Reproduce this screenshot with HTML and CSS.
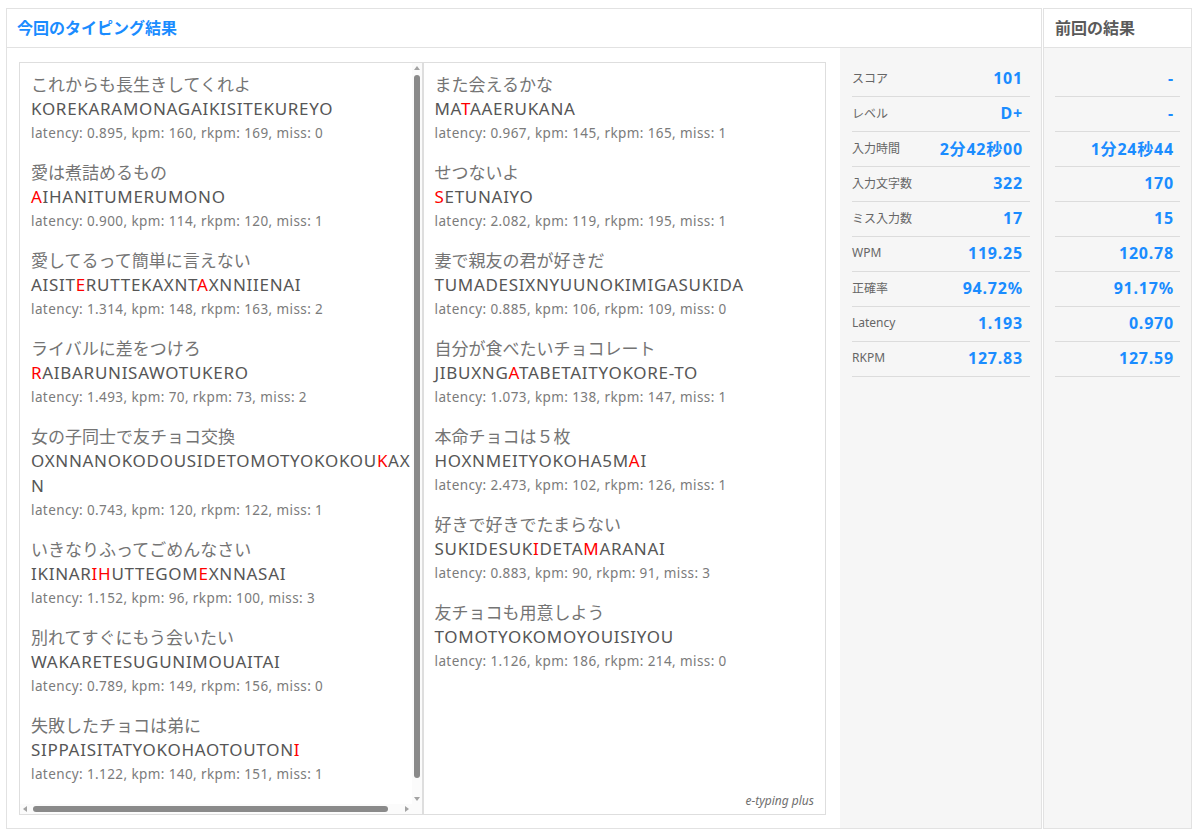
FILE: index.html
```html
<!DOCTYPE html>
<html lang="ja">
<head>
<meta charset="utf-8">
<title>今回のタイピング結果</title>
<link rel="stylesheet" href="styles.css">
</head>
<body>
<div class="page">
  <section class="panel current">
    <header class="panel-head"><h2 class="title-current">今回のタイピング結果</h2></header>
    <div class="panel-body">
      <div class="lists">
        <div class="box box-scroll">
          <div class="box-content">
            <div class="entry"><div class="jp">これからも長生きしてくれよ</div><div class="ro">KOREKARAMONAGAIKISITEKUREYO</div><div class="meta">latency: 0.895, kpm: 160, rkpm: 169, miss: 0</div></div>
            <div class="entry"><div class="jp">愛は煮詰めるもの</div><div class="ro"><span class="miss">A</span>IHANITUMERUMONO</div><div class="meta">latency: 0.900, kpm: 114, rkpm: 120, miss: 1</div></div>
            <div class="entry"><div class="jp">愛してるって簡単に言えない</div><div class="ro">AISIT<span class="miss">E</span>RUTTEKAXNT<span class="miss">A</span>XNNIIENAI</div><div class="meta">latency: 1.314, kpm: 148, rkpm: 163, miss: 2</div></div>
            <div class="entry"><div class="jp">ライバルに差をつけろ</div><div class="ro"><span class="miss">R</span>AIBARUNISAWOTUKERO</div><div class="meta">latency: 1.493, kpm: 70, rkpm: 73, miss: 2</div></div>
            <div class="entry"><div class="jp">女の子同士で友チョコ交換</div><div class="ro">OXNNANOKODOUSIDETOMOTYOKOKOU<span class="miss">K</span>AX<wbr>N</div><div class="meta">latency: 0.743, kpm: 120, rkpm: 122, miss: 1</div></div>
            <div class="entry"><div class="jp">いきなりふってごめんなさい</div><div class="ro">IKINAR<span class="miss">IH</span>UTTEGOM<span class="miss">E</span>XNNASAI</div><div class="meta">latency: 1.152, kpm: 96, rkpm: 100, miss: 3</div></div>
            <div class="entry"><div class="jp">別れてすぐにもう会いたい</div><div class="ro">WAKARETESUGUNIMOUAITAI</div><div class="meta">latency: 0.789, kpm: 149, rkpm: 156, miss: 0</div></div>
            <div class="entry"><div class="jp">失敗したチョコは弟に</div><div class="ro">SIPPAISITATYOKOHAOTOUTON<span class="miss">I</span></div><div class="meta">latency: 1.122, kpm: 140, rkpm: 151, miss: 1</div></div>
          </div>
          <div class="vbar">
            <span class="arrow arrow-up"></span>
            <div class="vtrack"><div class="vthumb"></div></div>
            <span class="arrow arrow-down"></span>
          </div>
          <div class="hbar">
            <span class="arrow arrow-left"></span>
            <div class="htrack"><div class="hthumb"></div></div>
            <span class="arrow arrow-right"></span>
          </div>
          <div class="corner"></div>
        </div>
        <div class="box box-plain">
          <div class="box-content">
            <div class="entry"><div class="jp">また会えるかな</div><div class="ro">MA<span class="miss">T</span>AAERUKANA</div><div class="meta">latency: 0.967, kpm: 145, rkpm: 165, miss: 1</div></div>
            <div class="entry"><div class="jp">せつないよ</div><div class="ro"><span class="miss">S</span>ETUNAIYO</div><div class="meta">latency: 2.082, kpm: 119, rkpm: 195, miss: 1</div></div>
            <div class="entry"><div class="jp">妻で親友の君が好きだ</div><div class="ro">TUMADESIXNYUUNOKIMIGASUKIDA</div><div class="meta">latency: 0.885, kpm: 106, rkpm: 109, miss: 0</div></div>
            <div class="entry"><div class="jp">自分が食べたいチョコレート</div><div class="ro">JIBUXNG<span class="miss">A</span>TABETAITYOKORE-TO</div><div class="meta">latency: 1.073, kpm: 138, rkpm: 147, miss: 1</div></div>
            <div class="entry"><div class="jp">本命チョコは５枚</div><div class="ro">HOXNMEITYOKOHA5M<span class="miss">A</span>I</div><div class="meta">latency: 2.473, kpm: 102, rkpm: 126, miss: 1</div></div>
            <div class="entry"><div class="jp">好きで好きでたまらない</div><div class="ro">SUKIDESUK<span class="miss">I</span>DETA<span class="miss">M</span>ARANAI</div><div class="meta">latency: 0.883, kpm: 90, rkpm: 91, miss: 3</div></div>
            <div class="entry"><div class="jp">友チョコも用意しよう</div><div class="ro">TOMOTYOKOMOYOUISIYOU</div><div class="meta">latency: 1.126, kpm: 186, rkpm: 214, miss: 0</div></div>
          </div>
          <div class="brand">e-typing plus</div>
        </div>
      </div>
      <ul class="stats">
        <li class="stat"><span class="label">スコア</span><span class="value">101</span></li>
        <li class="stat"><span class="label">レベル</span><span class="value">D+</span></li>
        <li class="stat"><span class="label">入力時間</span><span class="value">2分42秒00</span></li>
        <li class="stat"><span class="label">入力文字数</span><span class="value">322</span></li>
        <li class="stat"><span class="label">ミス入力数</span><span class="value">17</span></li>
        <li class="stat"><span class="label">WPM</span><span class="value">119.25</span></li>
        <li class="stat"><span class="label">正確率</span><span class="value">94.72%</span></li>
        <li class="stat"><span class="label">Latency</span><span class="value">1.193</span></li>
        <li class="stat"><span class="label">RKPM</span><span class="value">127.83</span></li>
      </ul>
    </div>
  </section>
  <section class="panel previous">
    <header class="panel-head prev-head"><h2 class="title-prev">前回の結果</h2></header>
    <ul class="stats prev-stats">
      <li class="stat"><span class="value">-</span></li>
      <li class="stat"><span class="value">-</span></li>
      <li class="stat"><span class="value">1分24秒44</span></li>
      <li class="stat"><span class="value">170</span></li>
      <li class="stat"><span class="value">15</span></li>
      <li class="stat"><span class="value">120.78</span></li>
      <li class="stat"><span class="value">91.17%</span></li>
      <li class="stat"><span class="value">0.970</span></li>
      <li class="stat"><span class="value">127.59</span></li>
    </ul>
  </section>
</div>
</body>
</html>
```

FILE: styles.css
```css
* { box-sizing: border-box; }
html, body { margin: 0; padding: 0; background: #fff; }
body {
  font-family: "Noto Sans", "Noto Sans CJK JP", sans-serif;
  color: #555;
}
.page {
  display: flex;
  gap: 1px;
  padding: 8px 8px 0 6px;
  height: 829px;
}
.panel {
  border: 1px solid #e2e2e2;
  display: flex;
  flex-direction: column;
}
.current { width: 1036px; }
.previous { width: 149px; }
.panel-head {
  height: 39px;
  border-bottom: 1px solid #e2e2e2;
  display: flex;
  align-items: center;
  padding: 0 0 2px 10px;
  flex: none;
}
.prev-head { padding-left: 11px; }
.panel-head h2 {
  margin: 0;
  font-size: 16px;
  font-weight: bold;
  font-family: "Noto Sans CJK JP", sans-serif;
  line-height: 1;
}
.title-current { color: #1a8cff; }
.title-prev { color: #5a5a5a; }
.panel-body {
  flex: 1;
  display: flex;
  min-height: 0;
}
.lists {
  flex: 1;
  display: grid;
  grid-template-columns: 1fr 1fr;
  padding: 14px 14px 13px 12px;
}
.box {
  border: 1px solid #dedede;
  min-height: 0;
  background: #fff;
}
.box-scroll {
  display: grid;
  grid-template-columns: 1fr 10px;
  grid-template-rows: 1fr 10px;
  overflow: hidden;
}
.box-plain {
  display: flex;
  flex-direction: column;
}
.box-content {
  padding: 8px 0 0 11px;
  overflow: hidden;
  min-height: 0;
}
.box-plain .box-content { flex: 1; }
.entry { margin-bottom: 13px; }
.jp, .ro, .meta { line-height: 25px; }
.jp {
  font-size: 17px;
  color: #747474;
  font-family: "Noto Sans CJK JP", sans-serif;
  white-space: nowrap;
}
.ro {
  font-size: 17px;
  letter-spacing: 0.7px;
  color: #565656;
  word-break: break-all;
}
.meta {
  font-size: 13.5px;
  letter-spacing: 0.4px;
  color: #7b7b7b;
  white-space: nowrap;
}
.miss { color: #ff0000; }
.brand {
  text-align: right;
  font-size: 12px;
  font-style: italic;
  color: #6f6f6f;
  padding: 0 11px 6px 0;
  line-height: 14px;
}

/* scrollbars */
.vbar {
  display: flex;
  flex-direction: column;
  align-items: center;
  background: #fbfbfb;
}
.vtrack {
  flex: 1;
  width: 100%;
  display: flex;
  justify-content: center;
  padding: 2px 0 14px;
}
.vthumb {
  width: 6px;
  height: 703px;
  border-radius: 3px;
  background: #8a8a8a;
}
.hbar {
  display: flex;
  align-items: center;
  background: #fbfbfb;
}
.htrack {
  flex: 1;
  height: 100%;
  display: flex;
  align-items: center;
  padding: 0 12px 0 3px;
}
.hthumb {
  width: 355px;
  height: 6px;
  border-radius: 3px;
  background: #8a8a8a;
}
.corner { background: #fbfbfb; }
.arrow {
  flex: none;
  width: 10px;
  height: 10px;
  display: flex;
  align-items: center;
  justify-content: center;
}
.arrow::before {
  content: "";
  width: 0;
  height: 0;
  border-style: solid;
  border-color: transparent;
}
.arrow-up::before { border-width: 0 3px 4px 3px; border-bottom-color: #a3a3a3; }
.arrow-down::before { border-width: 4px 3px 0 3px; border-top-color: #a3a3a3; }
.arrow-left::before { border-width: 3px 4px 3px 0; border-right-color: #a3a3a3; }
.arrow-right::before { border-width: 3px 0 3px 4px; border-left-color: #a3a3a3; }

/* stats */
.stats {
  list-style: none;
  margin: 0;
  background: #f6f6f6;
  width: 201px;
  padding: 14px 11px 0 12px;
  flex: none;
}
.prev-stats {
  width: auto;
  flex: 1;
  padding: 14px 11px 0 11px;
}
.stat {
  height: 35px;
  border-bottom: 1px solid #dcdcdc;
  display: flex;
  justify-content: space-between;
  align-items: center;
  padding: 0 7px 3px 0;
}
.prev-stats .stat { justify-content: flex-end; padding-right: 6px; }
.label {
  font-size: 12px;
  color: #666;
  font-family: "Noto Sans", "Noto Sans CJK JP", sans-serif;
}
.value {
  font-size: 16px;
  font-weight: bold;
  letter-spacing: 0.8px;
  color: #1a8cff;
}
```
